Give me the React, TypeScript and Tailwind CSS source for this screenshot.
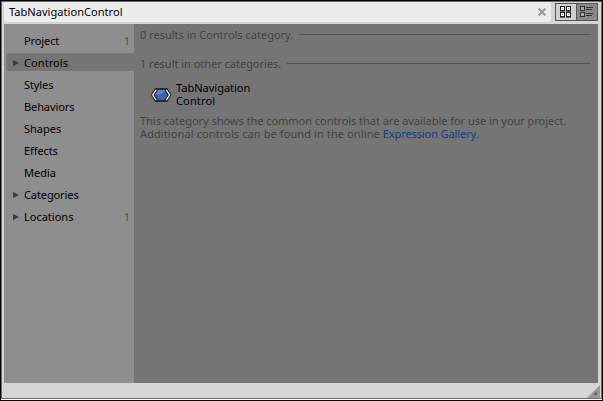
import React from "react";

type Item = { name: string; arrow?: boolean; count?: number; active?: boolean; track: string };

const items: Item[] = [
  { name: "Project", count: 1, track: "tracking-[-0.1px]" },
  { name: "Controls", arrow: true, active: true, track: "tracking-[0.08px]" },
  { name: "Styles", track: "tracking-[-0.1px]" },
  { name: "Behaviors", track: "tracking-[-0.1px]" },
  { name: "Shapes", track: "tracking-[0px]" },
  { name: "Effects", track: "tracking-[-0.1px]" },
  { name: "Media", track: "tracking-[0px]" },
  { name: "Categories", arrow: true, track: "tracking-[-0.1px]" },
  { name: "Locations", arrow: true, count: 1, track: "tracking-[0px]" },
];

function Tiles() {
  return (
    <svg width="12" height="12" viewBox="0 0 12 12" shapeRendering="crispEdges">
      {[[0, 0], [6, 0], [0, 6], [6, 6]].map(([x, y]) => (
        <g key={`${x}-${y}`}>
          <rect x={x} y={y} width="5" height="5" fill="#222" />
          <rect x={x} y={y + 5} width="5" height="1" fill="#666" />
          <rect x={x + 1} y={y + 1} width="3" height="3" fill="#fff" />
          <rect x={x + 2} y={y + 2} width="1" height="1" fill="#999" />
        </g>
      ))}
    </svg>
  );
}

function Rows() {
  return (
    <svg width="14" height="12" viewBox="0 0 14 12" shapeRendering="crispEdges">
      {[0, 6].map((y) => (
        <g key={y} fill="#333">
          <rect y={y} width="5" height="5" />
          <rect x="1" y={y + 1} width="3" height="3" fill="#a5a5a5" />
          <rect x="6" y={y + 1} width="7" height="1" />
          <rect x="6" y={y + 3} width="6" height="1" />
        </g>
      ))}
    </svg>
  );
}

function Hexagon() {
  return (
    <svg className="mt-[2px]" width="22" height="16" viewBox="0 0 22 16">
      <path d="M.8 8 5 1h12.4l4.2 7-4.2 7H5Z" fill="#2b2b2b" />
      <path d="M6 3 2.8 8 6 13M16.4 3l3.2 5-3.2 5" fill="none" stroke="#f4f4f4" strokeWidth="1.3" />
      <path d="M8.2 3h6l3 5-3 5h-6l-3-5Z" fill="#3a62b5" />
      <path d="M8.2 3h6l.8 1.3L11 7 5.2 8Z" fill="#6285c8" />
    </svg>
  );
}

function Heading({ text, track }: { text: string; track: string }) {
  return (
    <div className="flex h-[15px] items-center pr-[7px]">
      <span className={`whitespace-nowrap ${track}`}>{text}</span>
      <span className="ml-[6px] h-px flex-1 bg-[#555]" />
    </div>
  );
}

export default function App() {
  return (
    <div className="h-[401px] w-[603px] overflow-hidden border border-black bg-white font-['Noto_Sans',sans-serif] text-[11px] leading-[13px] text-black">
      <div className="flex h-[398px] flex-col border border-[#6c6c6c] bg-[#d5d5d5] pl-[2px]">
        <div className="flex h-[22px] shrink-0">
          <div className="flex h-5 w-[547px] items-center justify-between rounded-[3px] bg-[#ececec] pr-[5px] pl-[5px]">
            <span className="pb-[2px] tracking-[0.05px]">TabNavigationControl</span>
            <svg width="8" height="8" viewBox="0 0 8 8"><path d="m.6.6 6.8 6.8m0-6.8L.6 7.4" stroke="#999" strokeWidth="2.2" /></svg>
          </div>
          <div className="mt-px ml-1 flex h-[18px] w-[43px] border border-[#555]">
            <div className="flex w-5 items-center justify-center bg-[#d0d0d0]"><Tiles /></div>
            <div className="flex w-[21px] items-center justify-center border-l border-[#555] bg-[#888]"><Rows /></div>
          </div>
        </div>
        <div className="flex h-[359px] w-[594px] shrink-0 bg-[#757575]">
          <nav className="w-[130px] bg-[#8e8e8e] pt-[5px] pl-[2px]">
            {items.map((it) => (
              <div key={it.name} className="flex h-[22px] items-center">
                <div className={`flex h-[18px] w-full items-center rounded-l-[3px] pr-[4px] pl-[7px] ${it.active ? "bg-[#757575]" : ""}`}>
                  <span className="flex h-[7px] w-[11px] items-end">
                    {it.arrow && <svg width="6" height="6" viewBox="0 0 6 6"><path d="m0 0 6 3-6 3Z" fill="#3c3c3c" /></svg>}
                  </span>
                  <span className={`flex-1 ${it.track}`}>{it.name}</span>
                  {it.count && <span className="text-[#555]">{it.count}</span>}
                </div>
              </div>
            ))}
          </nav>
          <main className="w-[464px] pt-[3px] pl-[6px] text-[#444]">
            <Heading text="0 results in Controls category." track="tracking-[0px]" />
            <div className="h-[14px]" />
            <Heading text="1 result in other categories." track="tracking-[-0.02px]" />
            <div className="mt-[10px] ml-[10px] flex h-[26px] items-center gap-[4px] text-black">
              <Hexagon />
              <div>
                <div className="tracking-[0px]">TabNavigation</div>
                <div className="tracking-[0.15px]">Control</div>
              </div>
            </div>
            <div className="mt-[7px] whitespace-nowrap">
              <p className="tracking-[-0.035px]">This category shows the common controls that are available for use in your project.</p>
              <p className="tracking-[0.1px]">
                Additional controls can be found in the online <a className="tracking-[-0.1px] text-[#123f8c]">Expression Gallery</a>.
              </p>
            </div>
          </main>
        </div>
        <div className="flex flex-1 items-end justify-end pr-px">
          <svg width="13" height="13" viewBox="0 0 13 13"><path d="M13 0v13H0Z" fill="#999" /><path d="M10 6v4H6Z" fill="#666" /></svg>
        </div>
      </div>
    </div>
  );
}
